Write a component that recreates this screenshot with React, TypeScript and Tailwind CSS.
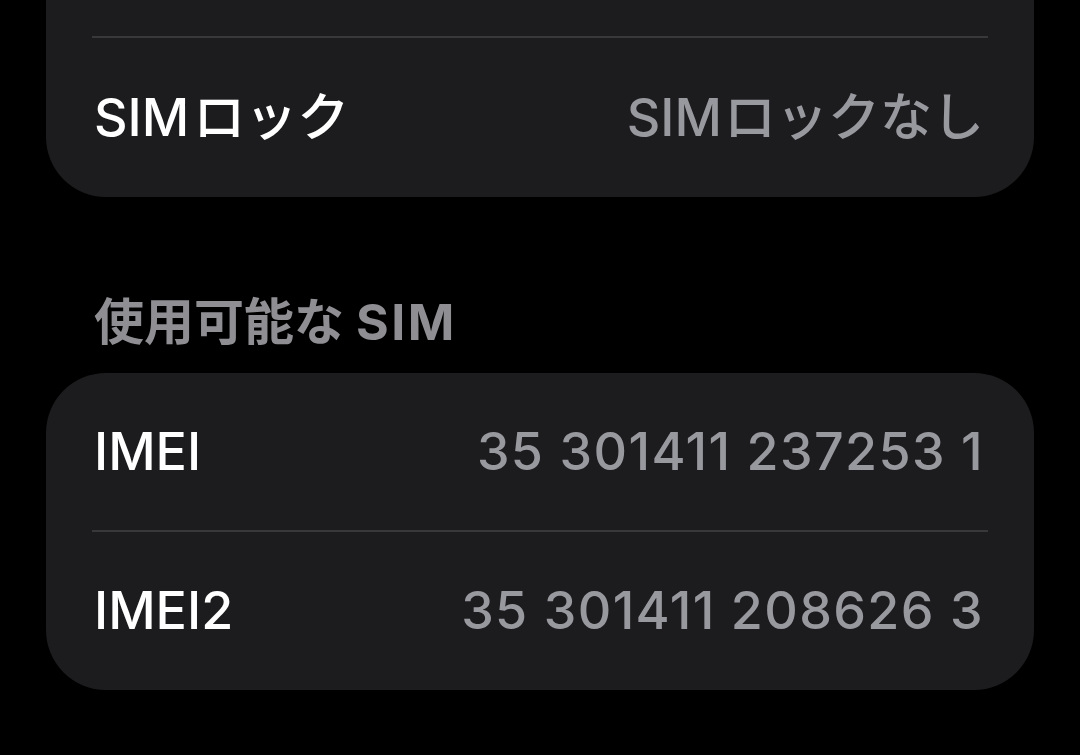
import React from 'react';

const FONT = '"Inter", "Noto Sans CJK JP", sans-serif';

interface RowProps {
    label: React.ReactNode;
    value: React.ReactNode;
    height: string;
    numeric?: boolean;
}

const Row: React.FC<RowProps> = ({ label, value, height, numeric }) => (
    <div className={`flex items-center justify-between pl-[2px] pr-[4px] ${height}`}>
        <span className="text-[52px] leading-none font-medium text-white">{label}</span>
        <span className={`text-[52px] leading-none font-medium text-[#98989f] ${numeric ? 'tracking-[0.026em]' : ''}`}>
            {value}
        </span>
    </div>
);

const Separator = () => <div className="h-[2px] bg-[#38383a]" />;

export default function App() {
    return (
        <div className="w-[1080px] h-[755px] bg-black px-[46px] overflow-hidden" style={{ fontFamily: FONT }}>
            {/* card whose upper rows are scrolled out of view */}
            <div className="bg-[#1c1c1e] rounded-b-[60px] px-[46px]">
                <div className="h-[36px]" />
                <Separator />
                <Row
                    label={<>SIM<span className="ml-[4px]">ロック</span></>}
                    value={<>SIM<span className="ml-[2px]">ロックなし</span></>}
                    height="h-[159px]"
                />
            </div>

            <div className="mt-[100px] mb-[26px] h-[50px] flex items-center pl-[48px]">
                <span className="text-[50px] leading-none font-bold text-[#8e8e93]">
                    使用可能な<span className="ml-[12px] tracking-[0.05em]">SIM</span>
                </span>
            </div>

            <div className="bg-[#1c1c1e] rounded-[60px] px-[46px]">
                <Row label="IMEI" value="35 301411 237253 1" height="h-[157px]" numeric />
                <Separator />
                <Row label="IMEI2" value="35 301411 208626 3" height="h-[158px]" numeric />
            </div>
        </div>
    );
}
